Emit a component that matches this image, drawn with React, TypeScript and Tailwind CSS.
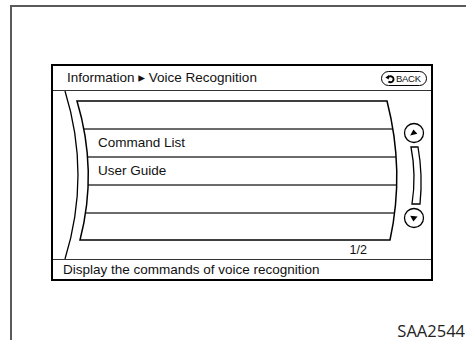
import React from "react";

const listClip = "M24,10 L334,10 Q352,80 337,149 L27,149 Q45,80 24,10 Z";

function BackIcon() {
  return (
    <svg width="10" height="10" viewBox="0 0 10 10" className="shrink-0">
      <path d="M2.2,3.6 Q5,1.2 7.8,3.2 Q9.4,5.4 7.6,7.4 Q5.4,9 3.4,7.6" fill="none" stroke="#000" strokeWidth="1.8" />
      <path d="M0.4,3.4 L4,1 L3.8,5.6 Z" fill="#000" />
    </svg>
  );
}

function ListFrame() {
  const rows = [38, 66, 94, 122];
  return (
    <svg className="absolute inset-0" width="378" height="168" viewBox="0 0 378 168">
      <defs>
        <clipPath id="listClip">
          <path d={listClip} />
        </clipPath>
      </defs>
      {/* outer arc */}
      <path d="M12,0 Q38,84 12,168" fill="none" stroke="#000" strokeWidth="1.3" />
      {/* row separators */}
      <g clipPath="url(#listClip)">
        {rows.map((y) => (
          <line key={y} x1="0" x2="378" y1={y} y2={y} stroke="#3a3a3a" strokeWidth="1.3" />
        ))}
      </g>
      {/* list box */}
      <path d={listClip} fill="none" stroke="#000" strokeWidth="1.5" />
      {/* scroll up */}
      <circle cx="361" cy="42" r="9.5" fill="#fff" stroke="#000" strokeWidth="1.3" />
      <path d="M357.2,44.6 L364.4,42.8 L360.4,38.6 Z" fill="#000" />
      {/* scroll bar */}
      <path d="M358,56 L365,56 Q370,84 367,113 L359,113 Q363.5,84 358,56 Z" fill="#fff" stroke="#000" strokeWidth="1.3" />
      {/* scroll down */}
      <circle cx="361" cy="127" r="9.5" fill="#fff" stroke="#000" strokeWidth="1.3" />
      <path d="M357.2,124.8 L364.6,125.6 L360.4,130.4 Z" fill="#000" />
    </svg>
  );
}

export default function App() {
  const items = ["", "Command List", "User Guide", "", ""];
  return (
    <div className="w-[466px] h-[340px] bg-white overflow-hidden text-[#111] font-['Liberation_Sans','DejaVu_Sans',sans-serif]">
      <div className="ml-[10px] mt-[5px] h-[335px] border-t-2 border-l-2 border-[#5a5a5a] flex flex-col">
        {/* Screen */}
        <div className="ml-[39px] mt-[57px] w-[382px] h-[217px] border-2 border-black flex flex-col">
          {/* Header */}
          <div className="h-[25px] border-b border-[#333] flex items-center justify-between pl-[14px] pr-[4px]">
            <span className="text-[13.5px] leading-none">Information ▸ Voice Recognition</span>
            <span className="flex items-center gap-[1px] h-[15px] w-[46px] border-[1.5px] border-black rounded-full pl-[3px] mt-[1px]">
              <BackIcon />
              <span className="text-[9.5px] leading-none tracking-[-0.3px]">BACK</span>
            </span>
          </div>

          {/* Body */}
          <div className="relative h-[168px]">
            <ListFrame />
            <div className="relative flex flex-col pt-[10px]">
              {items.map((label, i) => (
                <div key={i} className="h-[28px] flex items-center pl-[45px] text-[13.5px] leading-none">
                  {label}
                </div>
              ))}
              <div className="h-[18px] flex items-center justify-end pr-[64px] text-[12.5px] leading-none">1/2</div>
            </div>
          </div>

          {/* Footer */}
          <div className="h-[20px] border-t border-[#333] flex items-center pl-[10px]">
            <span className="text-[13.5px] leading-none">Display the commands of voice recognition</span>
          </div>
        </div>

        <div className="mt-auto self-end pr-[1px] pb-[1px] text-[16.5px] leading-none text-[#222] font-['Open_Sans',sans-serif]">
          SAA2544
        </div>
      </div>
    </div>
  );
}
